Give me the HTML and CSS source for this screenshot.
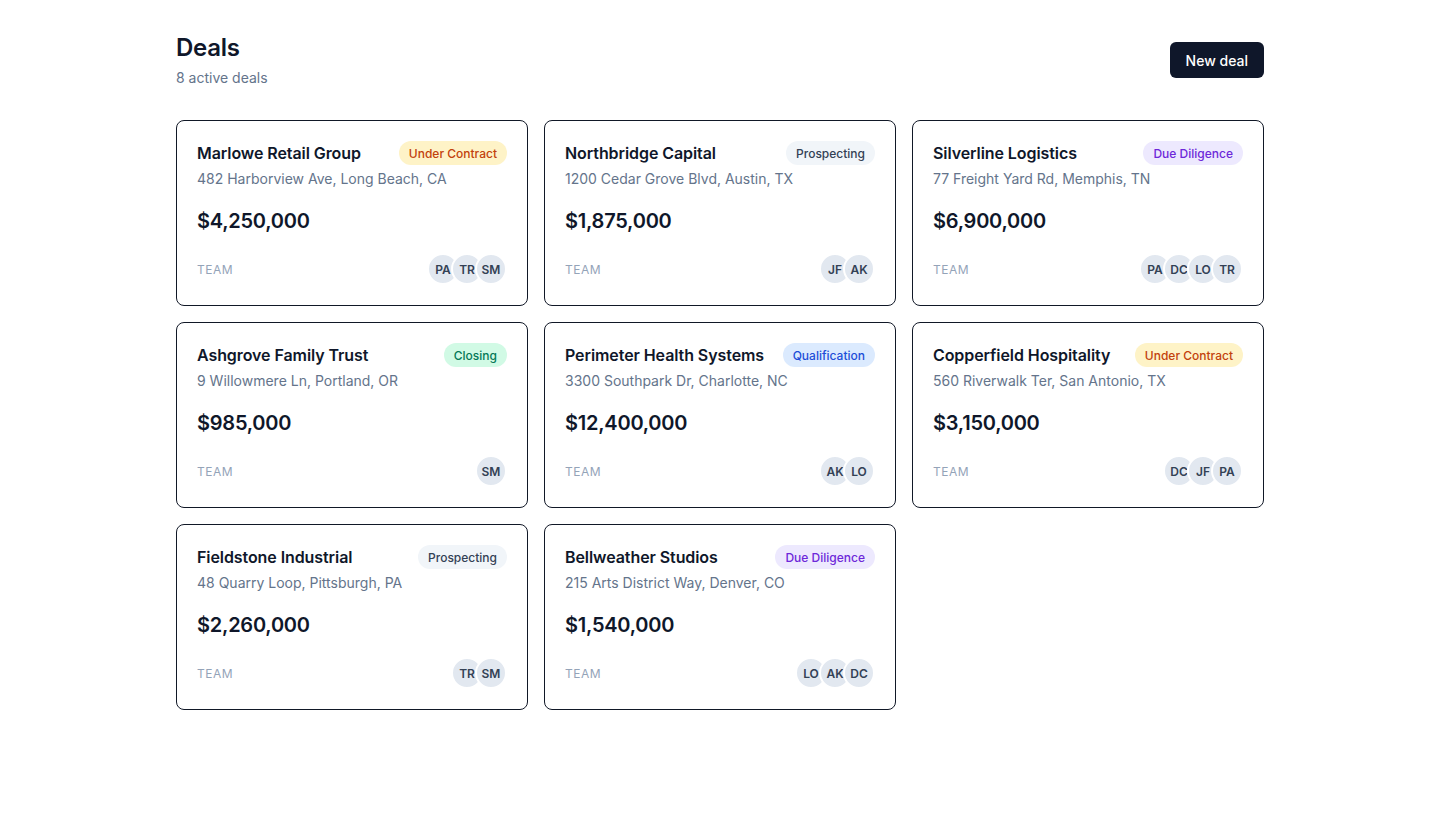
FILE: index.html
```html
<!DOCTYPE html>
<html lang="en">
<head>
<meta charset="utf-8">
<title>Deals</title>
<link rel="stylesheet" href="styles.css">
</head>
<body>
<main class="page">
  <header class="page-header">
    <div>
      <h1 class="title">Deals</h1>
      <p class="subtitle">8 active deals</p>
    </div>
    <button class="btn-primary">New deal</button>
  </header>

  <section class="grid">
    <article class="card">
      <div class="card-top">
        <h2 class="card-name">Marlowe Retail Group</h2>
        <span class="badge badge-contract">Under Contract</span>
      </div>
      <p class="card-address">482 Harborview Ave, Long Beach, CA</p>
      <p class="card-amount">$4,250,000</p>
      <div class="card-team">
        <span class="team-label">Team</span>
        <div class="avatars"><span class="avatar">PA</span><span class="avatar">TR</span><span class="avatar">SM</span></div>
      </div>
    </article>

    <article class="card">
      <div class="card-top">
        <h2 class="card-name">Northbridge Capital</h2>
        <span class="badge badge-prospecting">Prospecting</span>
      </div>
      <p class="card-address">1200 Cedar Grove Blvd, Austin, TX</p>
      <p class="card-amount">$1,875,000</p>
      <div class="card-team">
        <span class="team-label">Team</span>
        <div class="avatars"><span class="avatar">JF</span><span class="avatar">AK</span></div>
      </div>
    </article>

    <article class="card">
      <div class="card-top">
        <h2 class="card-name">Silverline Logistics</h2>
        <span class="badge badge-diligence">Due Diligence</span>
      </div>
      <p class="card-address">77 Freight Yard Rd, Memphis, TN</p>
      <p class="card-amount">$6,900,000</p>
      <div class="card-team">
        <span class="team-label">Team</span>
        <div class="avatars"><span class="avatar">PA</span><span class="avatar">DC</span><span class="avatar">LO</span><span class="avatar">TR</span></div>
      </div>
    </article>

    <article class="card">
      <div class="card-top">
        <h2 class="card-name">Ashgrove Family Trust</h2>
        <span class="badge badge-closing">Closing</span>
      </div>
      <p class="card-address">9 Willowmere Ln, Portland, OR</p>
      <p class="card-amount">$985,000</p>
      <div class="card-team">
        <span class="team-label">Team</span>
        <div class="avatars"><span class="avatar">SM</span></div>
      </div>
    </article>

    <article class="card">
      <div class="card-top">
        <h2 class="card-name">Perimeter Health Systems</h2>
        <span class="badge badge-qualification">Qualification</span>
      </div>
      <p class="card-address">3300 Southpark Dr, Charlotte, NC</p>
      <p class="card-amount">$12,400,000</p>
      <div class="card-team">
        <span class="team-label">Team</span>
        <div class="avatars"><span class="avatar">AK</span><span class="avatar">LO</span></div>
      </div>
    </article>

    <article class="card">
      <div class="card-top">
        <h2 class="card-name">Copperfield Hospitality</h2>
        <span class="badge badge-contract">Under Contract</span>
      </div>
      <p class="card-address">560 Riverwalk Ter, San Antonio, TX</p>
      <p class="card-amount">$3,150,000</p>
      <div class="card-team">
        <span class="team-label">Team</span>
        <div class="avatars"><span class="avatar">DC</span><span class="avatar">JF</span><span class="avatar">PA</span></div>
      </div>
    </article>

    <article class="card">
      <div class="card-top">
        <h2 class="card-name">Fieldstone Industrial</h2>
        <span class="badge badge-prospecting">Prospecting</span>
      </div>
      <p class="card-address">48 Quarry Loop, Pittsburgh, PA</p>
      <p class="card-amount">$2,260,000</p>
      <div class="card-team">
        <span class="team-label">Team</span>
        <div class="avatars"><span class="avatar">TR</span><span class="avatar">SM</span></div>
      </div>
    </article>

    <article class="card">
      <div class="card-top">
        <h2 class="card-name">Bellweather Studios</h2>
        <span class="badge badge-diligence">Due Diligence</span>
      </div>
      <p class="card-address">215 Arts District Way, Denver, CO</p>
      <p class="card-amount">$1,540,000</p>
      <div class="card-team">
        <span class="team-label">Team</span>
        <div class="avatars"><span class="avatar">LO</span><span class="avatar">AK</span><span class="avatar">DC</span></div>
      </div>
    </article>
  </section>
</main>
</body>
</html>
```

FILE: styles.css
```css
* { box-sizing: border-box; }

body {
  margin: 0;
  background: #ffffff;
  font-family: Inter, "Noto Sans", "Liberation Sans", sans-serif;
  color: #0f172a;
}

.page {
  max-width: 1088px;
  margin: 0 auto;
  padding: 32px 0;
}

.page-header {
  display: flex;
  align-items: center;
  justify-content: space-between;
  margin-bottom: 32px;
}

.title {
  margin: 0;
  font-size: 24px;
  line-height: 32px;
  font-weight: 600;
  color: #0f172a;
  letter-spacing: -0.01em;
}

.subtitle {
  margin: 4px 0 0;
  font-size: 14px;
  line-height: 20px;
  color: #64748b;
}

.btn-primary {
  height: 36px;
  padding: 0 16px;
  border: none;
  border-radius: 6px;
  background: #0f172a;
  color: #ffffff;
  font-family: inherit;
  font-size: 14px;
  font-weight: 500;
  cursor: pointer;
}

.grid {
  display: grid;
  grid-template-columns: repeat(3, 1fr);
  gap: 16px;
}

.card {
  display: flex;
  flex-direction: column;
  border: 1px solid #111827;
  border-radius: 8px;
  padding: 20px;
  background: #ffffff;
}

.card-top {
  display: flex;
  align-items: center;
  justify-content: space-between;
  gap: 12px;
  height: 24px;
}

.card-name {
  margin: 0;
  font-size: 16px;
  line-height: 24px;
  font-weight: 600;
  color: #0f172a;
  letter-spacing: -0.005em;
}

.badge {
  display: inline-flex;
  align-items: center;
  height: 24px;
  padding: 0 10px;
  border-radius: 999px;
  font-size: 12px;
  font-weight: 500;
  white-space: nowrap;
}

.badge-contract { background: #fef3c7; color: #c2410c; }
.badge-prospecting { background: #f1f5f9; color: #334155; }
.badge-diligence { background: #ede9fe; color: #6d28d9; }
.badge-qualification { background: #dbeafe; color: #1d4ed8; }
.badge-closing { background: #d1fae5; color: #047857; }

.card-address {
  margin: 4px 0 0;
  font-size: 14px;
  line-height: 20px;
  color: #64748b;
}

.card-amount {
  margin: 18px 0 0;
  font-size: 20px;
  line-height: 28px;
  font-weight: 600;
  color: #0f172a;
  letter-spacing: -0.012em;
}

.card-team {
  margin-top: 18px;
  display: flex;
  align-items: center;
  justify-content: space-between;
}

.team-label {
  font-size: 12px;
  line-height: 16px;
  font-weight: 400;
  text-transform: uppercase;
  letter-spacing: 0.04em;
  color: #94a3b8;
  padding-top: 1px;
}

.avatars {
  display: flex;
}

.avatar {
  width: 32px;
  height: 32px;
  border-radius: 50%;
  border: 2px solid #ffffff;
  background: #e2e8f0;
  color: #334155;
  font-size: 12px;
  font-weight: 600;
  display: flex;
  align-items: center;
  justify-content: center;
  padding-top: 1px;
}

.avatar + .avatar {
  margin-left: -8px;
}
```
